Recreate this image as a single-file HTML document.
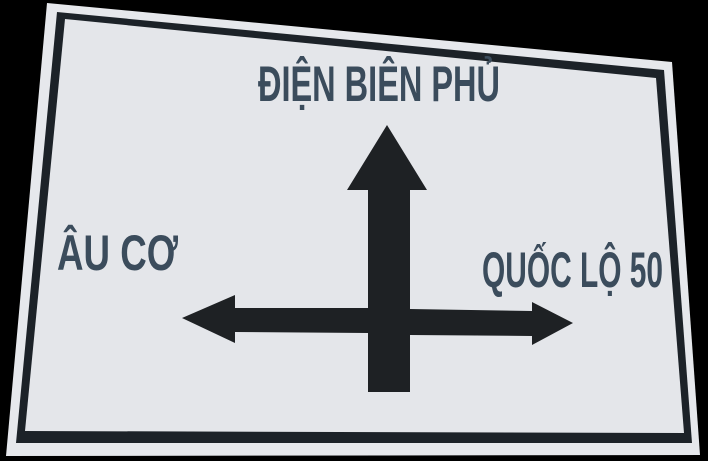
<!DOCTYPE html>
<html><head><meta charset="utf-8"><style>
html,body{margin:0;padding:0;background:#000;width:708px;height:461px;overflow:hidden}
svg{display:block}
</style></head><body>
<svg width="708" height="461" viewBox="0 0 708 461" xmlns="http://www.w3.org/2000/svg">
<rect width="708" height="461" fill="#000"/>
<polygon points="47,3 672,62 700,455 6,456" fill="#e6e8ec"/>
<polygon points="57,12 664,70 692,443 16,443" fill="#1c2228"/>
<polygon points="65,19 656,78 684,433 25,431" fill="#e4e6ea"/>
<g fill="#1e2124">
<polygon points="368,190 347,190 387,125 427,190 410,190 410,309 532,311 532,302 573,323 532,345 532,336 410,335 410,392 368,392 368,333 235,332 235,343 182,318 235,295 235,308 368,308"/>
</g>
<g fill="#3b4c5c" font-family="Liberation Sans, DejaVu Sans, sans-serif" font-weight="bold">
<text x="258" y="101" font-size="50" textLength="242" lengthAdjust="spacingAndGlyphs">ĐIỆN BIÊN PHỦ</text>
<text x="57" y="270" font-size="50" textLength="121" lengthAdjust="spacingAndGlyphs">ÂU CƠ</text>
<text x="482" y="287" font-size="50" textLength="181" lengthAdjust="spacingAndGlyphs">QUỐC LỘ 50</text>
</g>
</svg>
</body></html>
